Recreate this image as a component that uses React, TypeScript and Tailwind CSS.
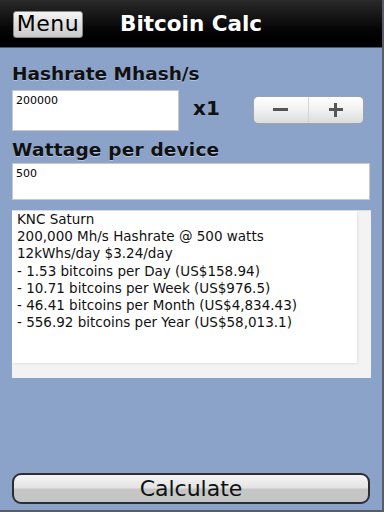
import React from "react";

const font = { fontFamily: '"DejaVu Sans", "Liberation Sans", sans-serif' };

export default function App() {
  const lines = [
    "KNC Saturn",
    "200,000 Mh/s Hashrate @ 500 watts",
    "12kWhs/day $3.24/day",
    "- 1.53 bitcoins per Day (US$158.94)",
    "- 10.71 bitcoins per Week (US$976.5)",
    "- 46.41 bitcoins per Month (US$4,834.43)",
    "- 556.92 bitcoins per Year (US$58,013.1)",
  ];
  return (
    <div className="w-[384px] h-[512px] bg-[#5a5d63] overflow-hidden" style={font}>
      <div className="w-[382px] h-[510px] bg-[#8ba3c9] flex flex-col">
        <div className="h-[48px] bg-gradient-to-b from-[#2a2a2a] via-[#0d0d0d] to-black flex items-center border-b border-[#4a5568] shrink-0">
          <div className="ml-[13px] w-[70px] h-[27px] mt-[1px] rounded-[3px] bg-gradient-to-b from-[#f4f4f4] to-[#c9c9c9] border border-[#888] flex items-center justify-center text-[22px] tracking-[0.5px] text-black leading-none">
            Menu
          </div>
          <div className="ml-[37px] text-white font-bold text-[21.5px] leading-none mt-[1px]">Bitcoin Calc</div>
        </div>

        <div className="px-[12px] pt-[17px] flex flex-col">
          <div className="text-[18.5px] font-bold text-[#111] leading-none [text-shadow:0_1px_0_rgba(255,255,255,0.35)]">
            Hashrate Mhash/s
          </div>
          <div className="flex items-start mt-[6px]">
            <div className="w-[167px] h-[41px] bg-white border border-[#c8c8c8] text-[11px] text-black px-[3px] pt-[3px] leading-tight">
              200000
            </div>
            <div className="ml-[14px] mt-[8px] text-[20px] font-bold text-[#111] leading-none">x1</div>
            <div className="ml-[33px] mt-[6px] w-[111px] h-[28px] rounded-[5px] border border-[#9aa4b0] bg-gradient-to-b from-white via-[#f0f0f0] to-[#dcdcdc] flex items-center">
              <div className="flex-1 flex items-center justify-center h-full border-r border-[#d4d4d4]">
                <div className="w-[15px] h-[3px] bg-[#555]" />
              </div>
              <div className="flex-1 flex items-center justify-center h-full relative">
                <div className="w-[14px] h-[3px] bg-[#555]" />
                <div className="w-[3px] h-[14px] bg-[#555] absolute" />
              </div>
            </div>
          </div>

          <div className="mt-[10px] text-[18.5px] font-bold text-[#111] leading-none tracking-[0.2px] [text-shadow:0_1px_0_rgba(255,255,255,0.35)]">
            Wattage per device
          </div>
          <div className="mt-[4px] w-[358px] h-[37px] bg-white border border-[#c8c8c8] text-[11px] text-black px-[3px] pt-[3px] leading-tight">
            500
          </div>

          <div className="mt-[10px] w-[359px] h-[168px] bg-[#f3f3f3] border-t border-[#ddd]">
            <div className="w-[345px] h-[152px] bg-white px-[5px] pt-[0px] shadow-[1px_1px_2px_rgba(0,0,0,0.08)]">
              {lines.map((l, i) => (
                <div key={i} className="text-[13.5px] text-[#111] leading-[17.2px] whitespace-nowrap">
                  {l}
                </div>
              ))}
            </div>
          </div>
        </div>

        <div className="flex-1" />
        <div className="px-[12px] pb-[6px]">
          <div className="h-[31px] rounded-[9px] border-2 border-[#2a2e35] bg-[linear-gradient(to_bottom,#f6f6f6_0%,#e2e2e2_48%,#c6c6c6_52%,#c4c4c4_100%)] flex items-center justify-center text-[22px] text-[#111] leading-none">
            Calculate
          </div>
        </div>
      </div>
    </div>
  );
}
